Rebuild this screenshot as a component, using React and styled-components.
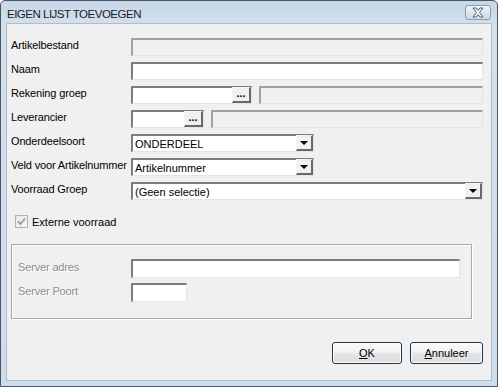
import React from 'react';
import styled, { createGlobalStyle } from 'styled-components';

const GlobalStyle = createGlobalStyle`
  html, body {
    margin: 0;
    padding: 0;
    background: #ffffff;
  }
  body {
    font-family: "Liberation Sans", Arial, sans-serif;
    font-size: 11px;
    color: #000;
  }
`;

const Window = styled.div`
  width: 498px;
  height: 387px;
  box-sizing: border-box;
  border: 1px solid #4b5663;
  border-radius: 5px 5px 0 0;
  background: linear-gradient(to bottom, #c7d7e8 0px, #d3e0ee 24px, #cfdceb 100%);
  display: flex;
  flex-direction: column;
  padding: 0 5px 5px 5px;
`;

const TitleBar = styled.div`
  height: 22px;
  display: flex;
  align-items: center;
  justify-content: space-between;
  padding: 0 1px 0 1px;
`;

const Title = styled.span`
  font-size: 11.5px;
  color: #1b1b1b;
  letter-spacing: -0.5px;
  padding-top: 3px;
`;

const CloseBox = styled.div`
  width: 26px;
  height: 15px;
  margin-top: 1px;
  margin-right: 0;
  box-sizing: border-box;
  border: 1px solid #8a9aad;
  border-radius: 3px;
  background: linear-gradient(to bottom, #eef3f8, #cdd9e6);
  display: flex;
  align-items: center;
  justify-content: center;
`;

const Content = styled.div`
  flex: 1;
  background: #f0f0f0;
  border: 1px solid #aebccb;
  padding: 14px 8px 0 4px;
  display: flex;
  flex-direction: column;
`;

const Rows = styled.div`
  display: flex;
  flex-direction: column;
  gap: 6px;
`;

const Row = styled.div`
  display: flex;
  align-items: flex-start;
  height: 18px;
`;

const Label = styled.div`
  width: 120px;
  flex: none;
  padding-top: 1px;
  letter-spacing: -0.15px;
  color: ${p => (p.$disabled ? '#8d8d8d' : '#000')};
  text-shadow: ${p => (p.$disabled ? '1px 1px 0 #ffffff' : 'none')};
  white-space: nowrap;
`;

const Field = styled.div`
  box-sizing: border-box;
  height: ${p => p.$h || 18}px;
  width: ${p => (p.$w ? p.$w + 'px' : 'auto')};
  flex: ${p => (p.$w ? 'none' : '1')};
  margin-left: ${p => p.$ml || 0}px;
  background: ${p => (p.$disabled ? '#f0f0f0' : '#ffffff')};
  border-style: solid;
  border-width: 2px 1px 1px 2px;
  border-color: ${p =>
    p.$disabled
      ? '#a0a0a0 #e3e3e3 #e3e3e3 #a0a0a0'
      : '#7d7d7d #e3e3e3 #e3e3e3 #7d7d7d'};
  display: flex;
  align-items: center;
  justify-content: space-between;
  padding-left: 2px;
  white-space: nowrap;
`;

const FieldText = styled.span`
  font-size: 11px;
  color: #000;
  padding-top: 1px;
`;

const SideButton = styled.div`
  box-sizing: border-box;
  width: ${p => p.$w || 17}px;
  height: 16px;
  align-self: stretch;
  margin-top: -1px;
  background: #f0f0f0;
  border-style: solid;
  border-width: 1px 2px 2px 1px;
  border-color: #f4f4f4 #6a6a6a #6a6a6a #f4f4f4;
  display: flex;
  align-items: center;
  justify-content: center;
  font-weight: bold;
  font-size: 11px;
  line-height: 1;
  padding-bottom: 3px;
`;

const Arrow = styled.div`
  width: 0;
  height: 0;
  border-left: 4px solid transparent;
  border-right: 4px solid transparent;
  border-top: 4px solid #000;
  margin-top: 3px;
`;

const CheckRow = styled.div`
  display: flex;
  align-items: center;
  gap: 4px;
  margin-top: 15px;
  padding-left: 4px;
  height: 13px;
`;

const CheckBox = styled.div`
  width: 13px;
  height: 13px;
  box-sizing: border-box;
  border: 1px solid #b1b1b1;
  background: linear-gradient(135deg, #e6e6e6, #f7f7f7);
  display: flex;
  align-items: center;
  justify-content: center;
`;

const GroupBox = styled.div`
  margin-top: 16px;
  margin-left: 0;
  margin-right: 11px;
  height: 75px;
  box-sizing: border-box;
  border: 1px solid #a9a9a9;
  box-shadow: inset 1px 1px 0 #ffffff, 1px 1px 0 #ffffff;
  padding: 14px 11px 0 6px;
  display: flex;
  flex-direction: column;
  gap: 5px;
`;

const GroupRow = styled.div`
  display: flex;
  align-items: flex-start;
  height: 19px;
`;

const GroupLabel = styled(Label)`
  width: 113px;
  padding-top: 2px;
`;

const ButtonBar = styled.div`
  display: flex;
  justify-content: flex-end;
  gap: 8px;
  margin-top: 23px;
`;

const Button = styled.div`
  box-sizing: border-box;
  width: ${p => p.$w}px;
  height: 22px;
  border: 1px solid #1c3652;
  border-radius: 3px;
  background: linear-gradient(to bottom, #fbfbfb 0%, #f0f0f0 50%, #e5e5e5 51%, #dedede 100%);
  box-shadow: inset 0 0 0 1px #fcfcfc;
  display: flex;
  align-items: center;
  justify-content: center;
  font-size: 11px;
  color: #000;
`;

const U = styled.span`
  text-decoration: underline;
`;

function CloseIcon() {
  return (
    <svg width="14" height="11" viewBox="0 0 14 11">
      <path
        d="M2 1 L5 1 L7 3.5 L9 1 L12 1 L8.5 5.5 L12 10 L9 10 L7 7.5 L5 10 L2 10 L5.5 5.5 Z"
        fill="#ffffff"
        stroke="#4d5a68"
        strokeWidth="1"
        strokeLinejoin="round"
      />
    </svg>
  );
}

function CheckMark() {
  return (
    <svg width="9" height="9" viewBox="0 0 9 9">
      <path d="M1 4.5 L3.5 7 L8 1.5" fill="none" stroke="#9a9a9a" strokeWidth="1.8" />
    </svg>
  );
}

function Select({ value, width }) {
  return (
    <Field $w={width}>
      <FieldText>{value}</FieldText>
      <SideButton>
        <Arrow />
      </SideButton>
    </Field>
  );
}

function Lookup({ width }) {
  return (
    <Field $w={width}>
      <span />
      <SideButton $w={19}>...</SideButton>
    </Field>
  );
}

export default function App() {
  return (
    <>
      <GlobalStyle />
      <Window>
        <TitleBar>
          <Title>EIGEN LIJST TOEVOEGEN</Title>
          <CloseBox>
            <CloseIcon />
          </CloseBox>
        </TitleBar>
        <Content>
          <Rows>
            <Row>
              <Label>Artikelbestand</Label>
              <Field $disabled />
            </Row>
            <Row>
              <Label>Naam</Label>
              <Field />
            </Row>
            <Row>
              <Label>Rekening groep</Label>
              <Lookup width={121} />
              <Field $disabled $ml={7} />
            </Row>
            <Row>
              <Label>Leverancier</Label>
              <Lookup width={73} />
              <Field $disabled $ml={7} />
            </Row>
            <Row>
              <Label>Onderdeelsoort</Label>
              <Select value="ONDERDEEL" width={183} />
            </Row>
            <Row>
              <Label>Veld voor Artikelnummer</Label>
              <Select value="Artikelnummer" width={183} />
            </Row>
            <Row>
              <Label>Voorraad Groep</Label>
              <Select value="(Geen selectie)" />
            </Row>
          </Rows>
          <CheckRow>
            <CheckBox>
              <CheckMark />
            </CheckBox>
            <span>Externe voorraad</span>
          </CheckRow>
          <GroupBox>
            <GroupRow>
              <GroupLabel $disabled>Server adres</GroupLabel>
              <Field $h={19} />
            </GroupRow>
            <GroupRow>
              <GroupLabel $disabled>Server Poort</GroupLabel>
              <Field $h={19} $w={56} />
            </GroupRow>
          </GroupBox>
          <ButtonBar>
            <Button $w={70}>
              <span><U>O</U>K</span>
            </Button>
            <Button $w={73}>
              <span><U>A</U>nnuleer</span>
            </Button>
          </ButtonBar>
        </Content>
      </Window>
    </>
  );
}
